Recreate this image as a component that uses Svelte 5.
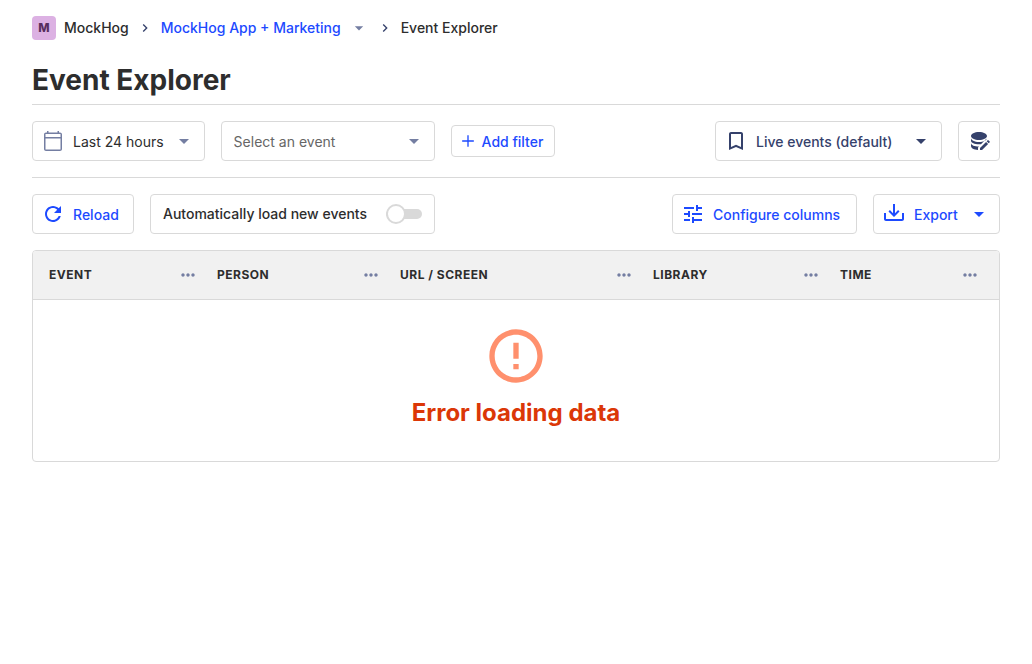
<script>
  const icons = {
    chevron: 'M10 6L8.59 7.41 13.17 12l-4.58 4.59L10 18l6-6z',
    caret: 'M7 10l5 5 5-5z',
    calendar:
      'M19 3.5h-1V2h-1.5v1.5h-9V2H6v1.5H5c-1.1 0-2 .9-2 2V20c0 1.1.9 2 2 2h14c1.1 0 2-.9 2-2V5.5c0-1.1-.9-2-2-2zM19.5 20.5h-15V9.5h15v11zM19.5 8h-15V5h15v3z',
    plus: 'M19 12.8h-6.2V19h-1.6v-6.2H5v-1.6h6.2V5h1.6v6.2H19z',
    bookmark:
      'M17 3H7c-1.1 0-2 .9-2 2v16l7-3 7 3V5c0-1.1-.9-2-2-2zm0 15l-5-2.18L7 18V5h10v13z',
    databaseEdit:
      'M12 3c4.42 0 8 1.79 8 4s-3.58 4-8 4-8-1.79-8-4 3.58-4 8-4zM4 9c0 2.21 3.58 4 8 4s8-1.79 8-4v.8c-.6.1-1 .4-1.4.8l-4.6 4.6c-.6.1-1.3.1-2 .1-4.42 0-8-1.4-8-3.6V9zM4 14c0 2.21 3.58 3.6 8 3.6L11 18.6V21c-3.95-.23-7-1.9-7-4v-3zM19.07 12.88l2.05 2.05L15.06 21H13v-2.06zM22.7 13.35l-1 1-2.05-2.05 1-1c.21-.21.56-.21.77 0l1.28 1.28c.21.21.21.56 0 .77z',
    reload:
      'M17.65 6.35C16.2 4.9 14.21 4 12 4c-4.42 0-7.99 3.58-7.99 8s3.57 8 7.99 8c3.73 0 6.84-2.55 7.73-6h-2.08c-.82 2.33-3.04 4-5.65 4-3.31 0-6-2.69-6-6s2.69-6 6-6c1.66 0 3.14.69 4.22 1.78L13 11h7V4l-2.35 2.35z',
    tune: 'M3 17v2h6v-2H3zM3 5v2h10V5H3zm10 16v-2h8v-2h-8v-2h-2v6h2zM7 9v2H3v2h4v2h2V9H7zm14 4v-2H11v2h10zm-6-4h2V7h4V5h-4V3h-2v6z',
    export:
      'M11 2h2v9.2l3.1-3.1 1.4 1.4L12 15 6.5 9.5l1.4-1.4 3.1 3.1V2zM2 11h2v6h16v-6h2v6c0 1.1-.9 2-2 2H4c-1.1 0-2-.9-2-2v-6z',
    more: 'M6 10c-1.1 0-2 .9-2 2s.9 2 2 2 2-.9 2-2-.9-2-2-2zm12 0c-1.1 0-2 .9-2 2s.9 2 2 2 2-.9 2-2-.9-2-2-2zm-6 0c-1.1 0-2 .9-2 2s.9 2 2 2 2-.9 2-2-.9-2-2-2z',
    error:
      'M11 15h2v2h-2zm0-8h2v6h-2zm1-5C6.47 2 2 6.48 2 12s4.47 10 9.99 10C17.52 22 22 17.52 22 12S17.52 2 12 2zm0 18c-4.42 0-8-3.58-8-8s3.58-8 8-8 8 3.58 8 8-3.58 8-8 8z',
  };

  const columns = [
    { title: 'Event', weight: 176 },
    { title: 'Person', weight: 183 },
    { title: 'URL / Screen', weight: 253 },
    { title: 'Library', weight: 187 },
    { title: 'Time', weight: 167 },
  ];
  const total = columns.reduce((sum, c) => sum + c.weight, 0);

  let autoload = $state(false);
</script>

{#snippet icon(name, kind = '')}
  <svg class="icon {kind}" viewBox="0 0 24 24" aria-hidden="true"><path d={icons[name]} /></svg>
{/snippet}

<main>
  <nav aria-label="Breadcrumb">
    <span class="lettermark">M</span>
    <span>MockHog</span>
    {@render icon('chevron', 'sm navy')}
    <a href="#project">MockHog App + Marketing</a>
    <button class="bare switcher" aria-label="Switch project">{@render icon('caret', 'md muted')}</button>
    {@render icon('chevron', 'sm navy')}
    <span>Event Explorer</span>
  </nav>

  <h1>Event Explorer</h1>

  <div class="bar filters">
    <button class="btn plain">
      {@render icon('calendar', 'muted')}<span>Last 24 hours</span>{@render icon('caret', 'muted')}
    </button>
    <div class="select">
      <select aria-label="Select an event">
        <option>Select an event</option>
      </select>
      {@render icon('caret', 'muted')}
    </div>
    <button class="btn small">{@render icon('plus', 'md')}<span>Add filter</span></button>
    <div class="end">
      <button class="btn dark views">
        {@render icon('bookmark')}<span>Live events (default)</span>{@render icon('caret')}
      </button>
      <button class="btn dark" aria-label="Edit saved views">{@render icon('databaseEdit')}</button>
    </div>
  </div>

  <div class="bar">
    <button class="btn wide-end refresh">{@render icon('reload')}<span>Reload</span></button>
    <label class="toggle">
      Automatically load new events
      <input type="checkbox" role="switch" bind:checked={autoload} />
    </label>
    <div class="end">
      <button class="btn wide-end configure">{@render icon('tune')}<span>Configure columns</span></button>
      <button class="btn download">{@render icon('export')}<span>Export</span>{@render icon('caret')}</button>
    </div>
  </div>

  <div class="card">
    <table>
      <thead>
        <tr>
          {#each columns as col}
            <th scope="col" style="width: {(col.weight / total) * 100}%">
              <div class="head">
                <span>{col.title}</span>
                <button class="bare more" aria-label="{col.title} options">{@render icon('more', 'md muted')}</button>
              </div>
            </th>
          {/each}
        </tr>
      </thead>
      <tbody>
        <tr>
          <td colspan={columns.length}>
            <div class="error">
              {@render icon('error', 'huge')}
              <h2>Error loading data</h2>
            </div>
          </td>
        </tr>
      </tbody>
    </table>
  </div>
</main>

<style>
  :global(body) {
    margin: 0;
    background: #fff;
  }
  main,
  button,
  select {
    font-family: Inter, 'Liberation Sans', sans-serif;
    font-size: 14px;
    line-height: 24px;
    color: #2d2d2d;
  }
  main {
    padding: 16px 32px;
  }
  main * {
    box-sizing: border-box;
  }
  .icon {
    width: 24px;
    height: 24px;
    flex-shrink: 0;
    display: block;
    fill: currentColor;
  }
  .sm {
    width: 16px;
    height: 16px;
  }
  .md {
    width: 20px;
    height: 20px;
  }
  .huge {
    width: 64px;
    height: 64px;
    color: #ff906d;
  }
  .muted {
    color: #747ea2;
  }
  .navy {
    color: #35416b;
  }
  nav {
    display: flex;
    align-items: center;
    gap: 8px;
    font-weight: 500;
  }
  nav a {
    color: #1d4aff;
    text-decoration: none;
  }
  .lettermark {
    width: 24px;
    height: 24px;
    border-radius: 4px;
    background: #dcb1e3;
    color: #572e5e;
    font-size: 12px;
    font-weight: 800;
    text-align: center;
  }
  .bare {
    display: flex;
    align-items: center;
    justify-content: center;
    padding: 0;
    border: 0;
    background: none;
    cursor: pointer;
  }
  .switcher {
    width: 20px;
  }
  h1 {
    margin: 24px 0 0;
    padding-bottom: 8px;
    border-bottom: 1px solid #d9d9d9;
    font-size: 28px;
    line-height: 32px;
    font-weight: 700;
  }
  .bar {
    display: flex;
    align-items: center;
    gap: 16px;
    padding: 16px 0;
  }
  .filters {
    border-bottom: 1px solid #d9d9d9;
  }
  .end {
    display: flex;
    gap: 16px;
    margin-left: auto;
  }
  .btn,
  .toggle,
  select {
    height: 40px;
    border: 1px solid #d9d9d9;
    border-radius: 4px;
    background: #fff;
  }
  .btn {
    display: flex;
    align-items: center;
    gap: 8px;
    padding: 0 8px;
    color: #1d4aff;
    font-weight: 500;
    white-space: nowrap;
    cursor: pointer;
  }
  .btn span {
    margin-right: auto;
    padding-top: 2px;
  }
  .plain {
    color: #2d2d2d;
    font-weight: 400;
  }
  .dark {
    color: #35416b;
  }
  .small {
    height: 32px;
    min-width: 104px;
    gap: 4px;
    padding: 0 8px 0 6px;
  }
  .wide-end {
    padding-right: 12px;
  }
  .views {
    min-width: 227px;
  }
  .refresh {
    min-width: 102px;
  }
  .configure {
    min-width: 185px;
  }
  .download {
    min-width: 127px;
  }
  .select {
    display: grid;
    align-items: center;
    width: 214px;
  }
  .select > :global(*) {
    grid-area: 1 / 1;
  }
  .select .icon {
    justify-self: end;
    margin-right: 9px;
    pointer-events: none;
  }
  select {
    appearance: none;
    width: 100%;
    padding: 2px 36px 0 12px;
    color: #666;
  }
  .toggle {
    display: flex;
    align-items: center;
    justify-content: space-between;
    gap: 8px;
    min-width: 285px;
    padding: 0 12px;
    font-weight: 500;
    white-space: nowrap;
  }
  .toggle input {
    appearance: none;
    display: flex;
    align-items: center;
    width: 36px;
    height: 10px;
    margin: 0;
    border-radius: 5px;
    background: #d9d9d9;
    cursor: pointer;
  }
  .toggle input::before {
    content: '';
    box-sizing: border-box;
    flex-shrink: 0;
    width: 20px;
    height: 20px;
    border: 2px solid #d9d9d9;
    border-radius: 50%;
    background: #fff;
  }
  .toggle input:checked {
    justify-content: flex-end;
    background: #a5b7ff;
  }
  .card {
    border: 1px solid #d9d9d9;
    border-radius: 4px;
    overflow: hidden;
  }
  table {
    width: 100%;
    table-layout: fixed;
    border-collapse: collapse;
  }
  th {
    height: 48px;
    padding: 0 8px;
    border-bottom: 1px solid #d9d9d9;
    background: #f1f1f1;
    font-size: 12px;
    font-weight: 700;
    letter-spacing: 0.5px;
    text-align: left;
    text-transform: uppercase;
  }
  th:first-child {
    padding-left: 16px;
  }
  th:last-child {
    padding-right: 16px;
  }
  .head {
    display: flex;
    align-items: center;
    justify-content: space-between;
  }
  .more {
    width: 26px;
    height: 24px;
  }
  td {
    padding: 0;
  }
  .error {
    display: flex;
    flex-direction: column;
    align-items: center;
    padding: 24px 16px 32px;
  }
  h2 {
    margin: 9px 0 0;
    color: #db3707;
    font-size: 24px;
    line-height: 32px;
    font-weight: 700;
  }
</style>
